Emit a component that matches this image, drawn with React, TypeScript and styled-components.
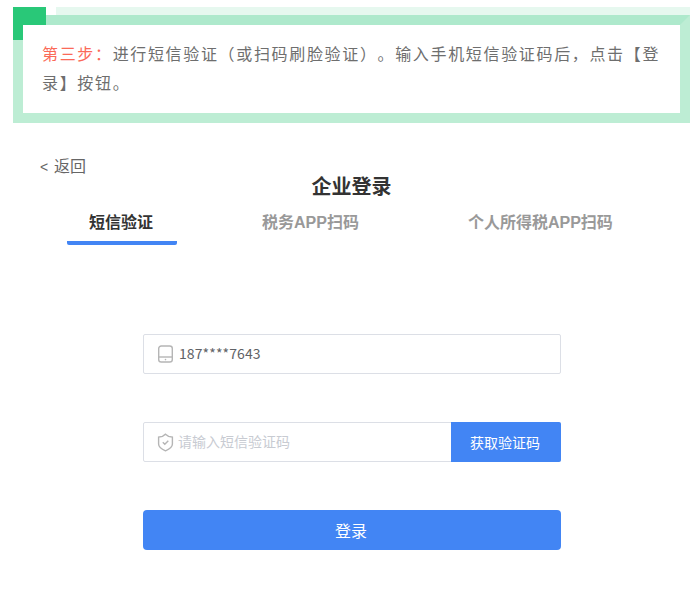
import { createGlobalStyle } from "styled-components";
import styled from "styled-components";

const fontStack = `"Liberation Sans", "Noto Sans CJK SC", sans-serif`;

const GlobalStyle = createGlobalStyle`
  html, body {
    margin: 0;
    padding: 0;
    background: #ffffff;
    font-family: ${fontStack};
    text-spacing-trim: space-all;
  }
`;

const PhoneIcon = () => (
  <svg width="17" height="18" viewBox="0 0 17 18" fill="none" stroke="#b5b5b5" strokeWidth="1.4">
    <rect x="1.700" y="1" width="13.600" height="16" rx="2.600" />
    <path d="M1.700 12h13.600" />
    <circle cx="8.500" cy="14.600" r="0.800" fill="#b5b5b5" stroke="none" />
  </svg>
);

const ShieldIcon = () => (
  <svg width="17" height="19" viewBox="0 0 17 19" fill="none" stroke="#b5b5b5" strokeWidth="1.4">
    <path d="M8.500 1.200l3 2.200 3.900.7v7c0 3-3.400 5.300-6.900 6.700-3.500-1.400-6.900-3.700-6.900-6.700v-7l3.900-.7z" />
    <path d="M5.800 9.200l2 2 3.500-3.500" />
  </svg>
);

export default function App() {
  return (
    <>
      <GlobalStyle />
      <Page>
        <Banner>
          <Corner />
          <TopStrip />
          <BannerText>
            <StepLabel>第三步：</StepLabel>
            进行短信验证（或扫码刷脸验证）。输入手机短信验证码后，点击【登录】按钮。
          </BannerText>
        </Banner>

        <BackLink>
          <BackArrow>&lt;</BackArrow>返回
        </BackLink>
        <Title>企业登录</Title>

        <Tabs>
          <Tab $active>短信验证</Tab>
          <Tab>税务APP扫码</Tab>
          <Tab>个人所得税APP扫码</Tab>
        </Tabs>

        <Form>
          <Field>
            <PhoneIcon />
            <PhoneValue>187****7643</PhoneValue>
          </Field>
          <Field>
            <ShieldIcon />
            <CodeInput placeholder="请输入短信验证码" />
            <CodeButton>获取验证码</CodeButton>
          </Field>
          <SubmitButton>登录</SubmitButton>
        </Form>
      </Page>
    </>
  );
}

const Page = styled.div`
  width: 699px;
  height: 600px;
  overflow: hidden;
  padding-top: 15px;
  box-sizing: border-box;
`;

const Banner = styled.div`
  position: relative;
  box-sizing: border-box;
  width: 677px;
  height: 108px;
  margin-left: 13px;
  padding: 15px 9px 0 19px;
  background: #ffffff;
  border: 10px solid #bdedd4;
  border-top-color: #aee9cc;
`;

const Corner = styled.div`
  position: absolute;
  left: -10px;
  top: -18px;
  width: 33px;
  height: 33px;
  background: linear-gradient(#29c878, #29c878) left top / 33px 18px no-repeat,
    linear-gradient(#29c878, #29c878) left top / 10px 33px no-repeat;
`;

const TopStrip = styled.div`
  position: absolute;
  left: 33px;
  right: -10px;
  top: -18px;
  height: 8px;
  background: #e6f8ef;
`;

const BannerText = styled.p`
  margin: 0;
  font-size: 16px;
  line-height: 29px;
  letter-spacing: 1.66px;
  color: #6e6e6e;
`;

const StepLabel = styled.span`
  color: #fb6a58;
`;

const BackLink = styled.div`
  display: flex;
  align-items: center;
  margin: 34px 0 0 40px;
  font-size: 16px;
  line-height: 20px;
  color: #666666;
`;

const BackArrow = styled.span`
  width: 14px;
  font-size: 14px;
`;

const Title = styled.h2`
  margin: 0;
  width: 703px;
  text-align: center;
  font-size: 20px;
  line-height: 20px;
  font-weight: 700;
  color: #333333;
`;

const Tabs = styled.div`
  display: flex;
  gap: 63px;
  margin: 13px 0 0 67px;
`;

const Tab = styled.div<{ $active?: boolean }>`
  padding: 0 24px 5px 22px;
  font-size: 16px;
  line-height: 26px;
  font-weight: 700;
  white-space: nowrap;
  color: ${(p) => (p.$active ? "#333333" : "#999999")};
  border-bottom: 4px solid ${(p) => (p.$active ? "#4285f4" : "transparent")};
  border-radius: 2px;
`;

const Form = styled.div`
  display: flex;
  flex-direction: column;
  gap: 48px;
  width: 418px;
  margin: 89px 0 0 143px;
`;

const Field = styled.div`
  display: flex;
  align-items: center;
  gap: 4px;
  box-sizing: border-box;
  height: 40px;
  padding-left: 13px;
  border: 1px solid #dcdfe6;
  border-radius: 2px;
  position: relative;
`;

const PhoneValue = styled.span`
  margin: -2px 0 0 1px;
  font-family: "Noto Sans CJK SC", sans-serif;
  font-size: 14px;
  letter-spacing: 0.1px;
  color: #606266;
`;

const CodeInput = styled.input`
  flex: 1;
  min-width: 0;
  border: none;
  outline: none;
  padding: 0;
  font-family: inherit;
  font-size: 14px;
  color: #606266;
  &::placeholder {
    color: #c8cbd2;
    opacity: 1;
  }
`;

const CodeButton = styled.button`
  flex: none;
  width: 110px;
  height: 40px;
  margin: -1px -1px -1px 0;
  padding: 0 2px 0 0;
  border: none;
  background: #4285f4;
  color: #ffffff;
  font-family: inherit;
  font-size: 14px;
  border-radius: 0 2px 2px 0;
`;

const SubmitButton = styled.button`
  height: 40px;
  padding: 0 2px 0 0;
  border: none;
  border-radius: 4px;
  background: #4285f4;
  color: #ffffff;
  font-family: inherit;
  font-size: 16px;
`;
